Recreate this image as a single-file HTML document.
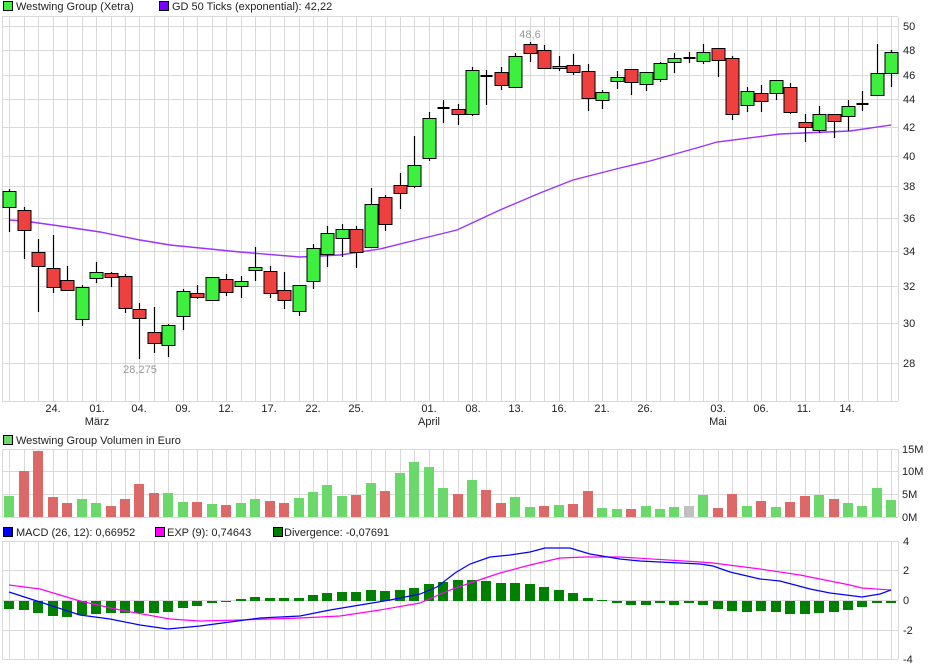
<!DOCTYPE html>
<html><head><meta charset="utf-8"><style>
body{margin:0;background:#fff;width:940px;height:670px;overflow:hidden;font-family:"Liberation Sans",sans-serif}
svg{display:block}
text{font-family:"Liberation Sans",sans-serif;font-size:11px;fill:#222}
</style></head><body>
<svg id="s" width="940" height="670" xmlns="http://www.w3.org/2000/svg">
<g id="grid" stroke="#d9d9d9" stroke-width="1" fill="none"></g>
<g id="vol"></g>
<g id="hist" fill="#008000"></g>
<g id="lines" fill="none"></g>
<g id="cand"></g>
<g id="txt">
<rect x="3.5" y="1.5" width="9" height="9" fill="#3ef03e" stroke="#000"/>
<text x="16" y="10">Westwing Group (Xetra)</text>
<rect x="159.5" y="1.5" width="9" height="9" fill="#7a00ff" stroke="#000"/>
<text x="172" y="10">GD 50 Ticks (exponential): 42,22</text>
<rect x="3.5" y="435.5" width="9" height="9" fill="#6ad86a" stroke="#000"/>
<text x="16" y="444">Westwing Group Volumen in Euro</text>
<rect x="3.5" y="527.5" width="9" height="9" fill="#0000ff" stroke="#000"/>
<text x="16" y="536">MACD (26, 12): 0,66952</text>
<rect x="155.5" y="527.5" width="9" height="9" fill="#ff00ff" stroke="#000"/>
<text x="167" y="536">EXP (9): 0,74643</text>
<rect x="273.5" y="527.5" width="9" height="9" fill="#008000" stroke="#000"/>
<text x="284" y="536">Divergence: -0,07691</text>
<text x="140" y="373" text-anchor="middle" style="fill:#999">28,275</text>
<text x="530" y="38" text-anchor="middle" style="fill:#999">48,6</text>
</g>
</svg>
<script>
var NS="http://www.w3.org/2000/svg";
function el(p,t,a,tx){var e=document.createElementNS(NS,t);for(var k in a)e.setAttribute(k,a[k]);if(tx!=null)e.textContent=tx;document.getElementById(p).appendChild(e);return e;}
function X(i){return 9.3+i*14.46;}
for(var i=0;i<62;i++){var x=Math.round(X(i))+0.5;
 el('grid','line',{x1:x,y1:17,x2:x,y2:401});
 el('grid','line',{x1:x,y1:449,x2:x,y2:517});
 el('grid','line',{x1:x,y1:541,x2:x,y2:659});}
[2.5,898.5].forEach(function(x){el('grid','line',{x1:x,y1:17,x2:x,y2:401});el('grid','line',{x1:x,y1:449,x2:x,y2:517});el('grid','line',{x1:x,y1:541,x2:x,y2:659});});
function hl(y,x2){el('grid','line',{x1:2,y1:y,x2:x2||898,y2:y});}
hl(16.5);hl(401.5);
var pl=[[50,26],[48,50],[46,75],[44,99],[42,127],[40,156],[38,186],[36,218],[34,251],[32,286],[30,323],[28,363]];
pl.forEach(function(p){hl(p[1]+0.5);el('txt','text',{x:903,y:p[1]+4},p[0]);});
[[449,'15M'],[471,'10M'],[494,'5M'],[517,'0M']].forEach(function(p){hl(p[0]+0.5);el('txt','text',{x:902,y:p[0]+4},p[1]);});
[[541,'4'],[570,'2'],[600,'0'],[630,'-2'],[659,'-4']].forEach(function(p){hl(p[0]+0.5);el('txt','text',{x:903,y:p[0]+4},p[1]);});
[[53,'24.'],[97,'01.'],[139,'04.'],[183,'09.'],[226,'12.'],[269,'17.'],[313,'22.'],[356,'25.'],[429,'01.'],[473,'08.'],[516,'13.'],[559,'16.'],[602,'21.'],[645,'26.'],[718,'03.'],[761,'06.'],[804,'11.'],[847,'14.']].forEach(function(d){el('txt','text',{x:d[0],y:412,'text-anchor':'middle'},d[1]);});
[[97,'März'],[429,'April'],[718,'Mai']].forEach(function(d){el('txt','text',{x:d[0],y:425,'text-anchor':'middle'},d[1]);});
var C=[[191,207,189,232,'G'],[210,230,207,259,'R'],[252,266,239,312,'R'],[268,287,235,293,'R'],[280,290,266,291,'R'],[287,319,285,326,'G'],[272,278,262,283,'G'],[273,277,272,287,'R'],[276,308,274,313,'R'],[309,318,303,359,'R'],[332,343,307,353,'R'],[325,345,324,357,'G'],[291,316,289,330,'G'],[293,297,285,299,'R'],[277,300,277,300,'G'],[279,292,274,296,'R'],[281,286,276,298,'G'],[267,270,247,281,'G'],[271,293,266,298,'R'],[290,300,272,309,'R'],[285,311,285,316,'G'],[248,281,244,289,'G'],[233,254,226,267,'G'],[229,238,224,257,'G'],[229,252,226,268,'R'],[204,247,188,247,'G'],[197,224,195,231,'R'],[185,193,173,209,'R'],[165,186,136,188,'G'],[118,158,112,161,'G'],[108,108,100,123,'D'],[109,114,104,125,'R'],[70,114,67,116,'G'],[76,76,70,105,'D'],[72,85,67,90,'R'],[56,87,53,87,'G'],[44,53,42,62,'R'],[50,68,45,69,'R'],[66,68,56,71,'G'],[65,72,54,75,'R'],[71,98,64,111,'R'],[92,100,90,109,'G'],[77,81,71,89,'G'],[69,82,69,95,'R'],[72,84,72,91,'G'],[63,79,62,82,'G'],[58,62,53,73,'G'],[58,58,52,63,'D'],[52,61,44,64,'G'],[48,60,48,77,'R'],[58,114,56,120,'R'],[91,105,87,112,'G'],[93,101,85,112,'R'],[80,93,80,100,'G'],[87,112,83,114,'R'],[122,127,114,142,'R'],[114,130,106,133,'G'],[114,121,114,138,'R'],[106,116,100,131,'G'],[104,104,91,111,'D'],[73,95,44,95,'G'],[52,73,50,87,'G']];
var gd=[[9,220],[24,221],[60,226],[100,232],[140,240],[170,245],[240,252],[300,257],[340,255],[380,249],[420,239],[457,230],[500,210],[540,193],[573,180],[620,168],[650,161],[700,147],[717,142],[780,134],[850,131],[891,125]];
el('lines','polyline',{points:gd.join(' '),stroke:'#9933ff','stroke-width':1.4});
C.forEach(function(c,i){var x=Math.round(X(i))+0.5;
 el('cand','line',{x1:x,y1:c[2],x2:x,y2:c[3],stroke:'#000','stroke-width':1.2});
 if(c[4]=='D'){el('cand','line',{x1:x-6,y1:c[0],x2:x+6,y2:c[0],stroke:'#000','stroke-width':2});}
 else el('cand','rect',{x:x-6.5,y:c[0]+0.5,width:13,height:Math.max(1,c[1]-c[0]),fill:c[4]=='G'?'#3ef03e':'#ef4040',stroke:'#000','stroke-width':1});
});
var V=[[496,'G'],[471,'R'],[451,'R'],[497,'R'],[503,'R'],[499,'G'],[503,'G'],[506,'R'],[499,'R'],[484,'R'],[493,'R'],[493,'G'],[502,'G'],[502,'R'],[504,'G'],[505,'R'],[503,'G'],[499,'G'],[501,'R'],[503,'R'],[498,'G'],[492,'G'],[485,'G'],[496,'G'],[495,'R'],[483,'G'],[491,'R'],[473,'G'],[462,'G'],[467,'G'],[488,'G'],[494,'R'],[480,'G'],[490,'R'],[503,'R'],[497,'G'],[507,'G'],[506,'R'],[505,'G'],[504,'R'],[491,'R'],[508,'G'],[509,'G'],[509,'R'],[506,'G'],[509,'G'],[507,'G'],[506,'Y'],[495,'G'],[508,'R'],[494,'R'],[506,'G'],[501,'R'],[507,'G'],[502,'R'],[496,'R'],[495,'G'],[499,'R'],[503,'G'],[506,'G'],[488,'G'],[500,'G']];
V.forEach(function(v,i){var x=Math.round(X(i));el('vol','rect',{x:x-5,y:v[0],width:10,height:517-v[0],fill:v[1]=='G'?'#6ad86a':v[1]=='R'?'#dc6868':'#c0c0c0'});});
var H=[609,610,613,616,617,615,614,613,613,613,613,612,608,606,603,602,599,597,598,598,598,595,593,592,592,590,591,590,588,584,582,580,580,581,583,583,584,587,590,593,598,600,603,605,605,603,605,603,605,609,611,612,611,612,614,614,613,612,610,607,603,603];
H.forEach(function(h,i){var x=Math.round(X(i));var y0=601;el('hist','rect',{x:x-5,y:Math.min(h,y0),width:10,height:Math.max(1,Math.abs(h-y0))});});
var M=[[9,592],[40,602],[80,615],[110,619],[140,625],[168,629],[200,626],[230,622],[260,618],[300,616],[330,610],[360,605],[390,600],[420,594],[437,587],[455,573],[470,564],[490,557],[510,555],[530,552],[545,548],[570,548],[590,554],[620,559],[640,561],[700,564],[713,566],[730,572],[760,579],[780,581],[810,589],[830,593],[862,597],[880,594],[891,590]];
var E=[[9,585],[40,589],[80,601],[120,610],[170,619],[200,621],[240,620],[300,618],[340,616],[380,610],[420,603],[450,590],[470,583],[500,573],[530,565],[560,558],[585,557],[620,557],[700,562],[713,563],[760,569],[800,575],[850,585],[862,588],[891,590]];
el('lines','polyline',{points:E.join(' '),stroke:'#ff00ff','stroke-width':1.2});
el('lines','polyline',{points:M.join(' '),stroke:'#0000ff','stroke-width':1.2});
</script>
</body></html>
